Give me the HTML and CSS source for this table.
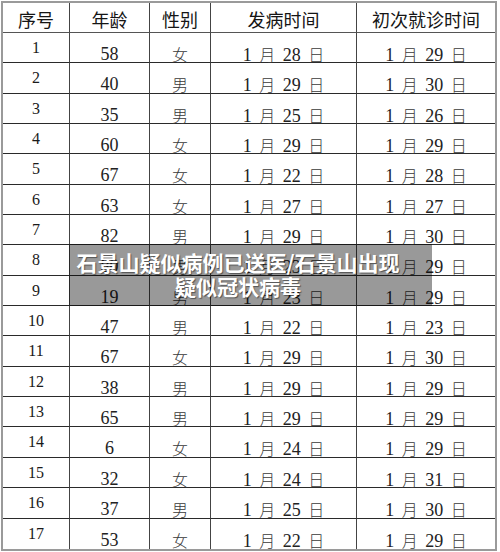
FILE: index.html
```html
<!DOCTYPE html>
<html lang="zh">
<head>
<meta charset="utf-8">
<link rel="stylesheet" href="styles.css">
</head>
<body>
<div class="page">
  <div class="table">
    <div class="cell head">序号</div><div class="cell head">年龄</div><div class="cell head">性别</div><div class="cell head">发病时间</div><div class="cell head last">初次就诊时间</div>

    <div class="cell no">1</div><div class="cell v">58</div><div class="cell v"><span class="c">女</span></div><div class="cell v">1 <span class="c">月</span> 28 <span class="c">日</span></div><div class="cell v last">1 <span class="c">月</span> 29 <span class="c">日</span></div>
    <div class="cell no">2</div><div class="cell v">40</div><div class="cell v"><span class="c">男</span></div><div class="cell v">1 <span class="c">月</span> 29 <span class="c">日</span></div><div class="cell v last">1 <span class="c">月</span> 30 <span class="c">日</span></div>
    <div class="cell no">3</div><div class="cell v">35</div><div class="cell v"><span class="c">男</span></div><div class="cell v">1 <span class="c">月</span> 25 <span class="c">日</span></div><div class="cell v last">1 <span class="c">月</span> 26 <span class="c">日</span></div>
    <div class="cell no">4</div><div class="cell v">60</div><div class="cell v"><span class="c">女</span></div><div class="cell v">1 <span class="c">月</span> 29 <span class="c">日</span></div><div class="cell v last">1 <span class="c">月</span> 29 <span class="c">日</span></div>
    <div class="cell no">5</div><div class="cell v">67</div><div class="cell v"><span class="c">女</span></div><div class="cell v">1 <span class="c">月</span> 22 <span class="c">日</span></div><div class="cell v last">1 <span class="c">月</span> 28 <span class="c">日</span></div>
    <div class="cell no">6</div><div class="cell v">63</div><div class="cell v"><span class="c">女</span></div><div class="cell v">1 <span class="c">月</span> 27 <span class="c">日</span></div><div class="cell v last">1 <span class="c">月</span> 27 <span class="c">日</span></div>
    <div class="cell no">7</div><div class="cell v">82</div><div class="cell v"><span class="c">男</span></div><div class="cell v">1 <span class="c">月</span> 29 <span class="c">日</span></div><div class="cell v last">1 <span class="c">月</span> 30 <span class="c">日</span></div>
    <div class="cell no">8</div><div class="cell v">80</div><div class="cell v"><span class="c">男</span></div><div class="cell v">1 <span class="c">月</span> 23 <span class="c">日</span></div><div class="cell v last">1 <span class="c">月</span> 29 <span class="c">日</span></div>
    <div class="cell no">9</div><div class="cell v">19</div><div class="cell v"><span class="c">男</span></div><div class="cell v">1 <span class="c">月</span> 23 <span class="c">日</span></div><div class="cell v last">1 <span class="c">月</span> 29 <span class="c">日</span></div>
    <div class="cell no">10</div><div class="cell v">47</div><div class="cell v"><span class="c">男</span></div><div class="cell v">1 <span class="c">月</span> 22 <span class="c">日</span></div><div class="cell v last">1 <span class="c">月</span> 23 <span class="c">日</span></div>
    <div class="cell no">11</div><div class="cell v">67</div><div class="cell v"><span class="c">女</span></div><div class="cell v">1 <span class="c">月</span> 29 <span class="c">日</span></div><div class="cell v last">1 <span class="c">月</span> 30 <span class="c">日</span></div>
    <div class="cell no">12</div><div class="cell v">38</div><div class="cell v"><span class="c">男</span></div><div class="cell v">1 <span class="c">月</span> 29 <span class="c">日</span></div><div class="cell v last">1 <span class="c">月</span> 29 <span class="c">日</span></div>
    <div class="cell no">13</div><div class="cell v">65</div><div class="cell v"><span class="c">男</span></div><div class="cell v">1 <span class="c">月</span> 29 <span class="c">日</span></div><div class="cell v last">1 <span class="c">月</span> 29 <span class="c">日</span></div>
    <div class="cell no">14</div><div class="cell v">6</div><div class="cell v"><span class="c">女</span></div><div class="cell v">1 <span class="c">月</span> 24 <span class="c">日</span></div><div class="cell v last">1 <span class="c">月</span> 29 <span class="c">日</span></div>
    <div class="cell no">15</div><div class="cell v">32</div><div class="cell v"><span class="c">女</span></div><div class="cell v">1 <span class="c">月</span> 24 <span class="c">日</span></div><div class="cell v last">1 <span class="c">月</span> 31 <span class="c">日</span></div>
    <div class="cell no">16</div><div class="cell v">37</div><div class="cell v"><span class="c">男</span></div><div class="cell v">1 <span class="c">月</span> 25 <span class="c">日</span></div><div class="cell v last">1 <span class="c">月</span> 30 <span class="c">日</span></div>
    <div class="cell no bottom">17</div><div class="cell v bottom">53</div><div class="cell v bottom"><span class="c">女</span></div><div class="cell v bottom">1 <span class="c">月</span> 22 <span class="c">日</span></div><div class="cell v last bottom">1 <span class="c">月</span> 29 <span class="c">日</span></div>
  </div>
  <div class="banner">
    <div class="banner-text">石景山疑似病例已送医/石景山出现<br>疑似冠状病毒</div>
  </div>
</div>
</body>
</html>
```

FILE: styles.css
```css
html, body {
  margin: 0;
  padding: 0;
  background: #fff;
}
.page {
  position: relative;
  width: 500px;
  height: 552px;
  overflow: hidden;
}
.table {
  margin: 1px 0 0 1px;
  width: 496px;
  box-sizing: border-box;
  border: 2px solid #9a9a9a;
  display: grid;
  grid-template-columns: 67px 80px 61px 146px 138px;
  grid-template-rows: 30px repeat(17, 30.35px);
}
.cell {
  box-sizing: border-box;
  border-right: 1px solid #444;
  border-bottom: 1px solid #2a2a2a;
  display: block;
  text-align: center;
  white-space: nowrap;
  color: #222;
}
.cell.last { border-right: none; }
.cell.bottom { border-bottom: none; }
.head {
  font-family: "Noto Sans CJK SC", sans-serif;
  font-size: 18px;
  line-height: 20px;
  padding-top: 6px;
  color: #151515;
  border-bottom-color: #555;
}
.no {
  font-family: "Liberation Serif", serif;
  font-size: 16px;
  line-height: 16px;
  padding-top: 7px;
  color: #1a1a1a;
}
.v {
  font-family: "Liberation Serif", serif;
  font-size: 18px;
  line-height: 16px;
  padding-top: 13px;
  word-spacing: 3px;
}
.c {
  font-family: "Noto Sans CJK SC", sans-serif;
  font-size: 16px;
  font-weight: 300;
  color: #3a3a3a;
}
.banner {
  position: absolute;
  left: 69px;
  top: 244px;
  width: 363px;
  height: 62px;
  background: rgba(0, 0, 0, 0.4);
  box-sizing: border-box;
  padding: 6px 25px 0 0;
}
.banner-text {
  font-family: "Noto Sans CJK SC", sans-serif;
  font-weight: 700;
  font-size: 21px;
  line-height: 24px;
  color: #fff;
  text-align: center;
  white-space: nowrap;
  text-shadow: 1px 1px 1px rgba(0, 0, 0, 0.45);
}
```
